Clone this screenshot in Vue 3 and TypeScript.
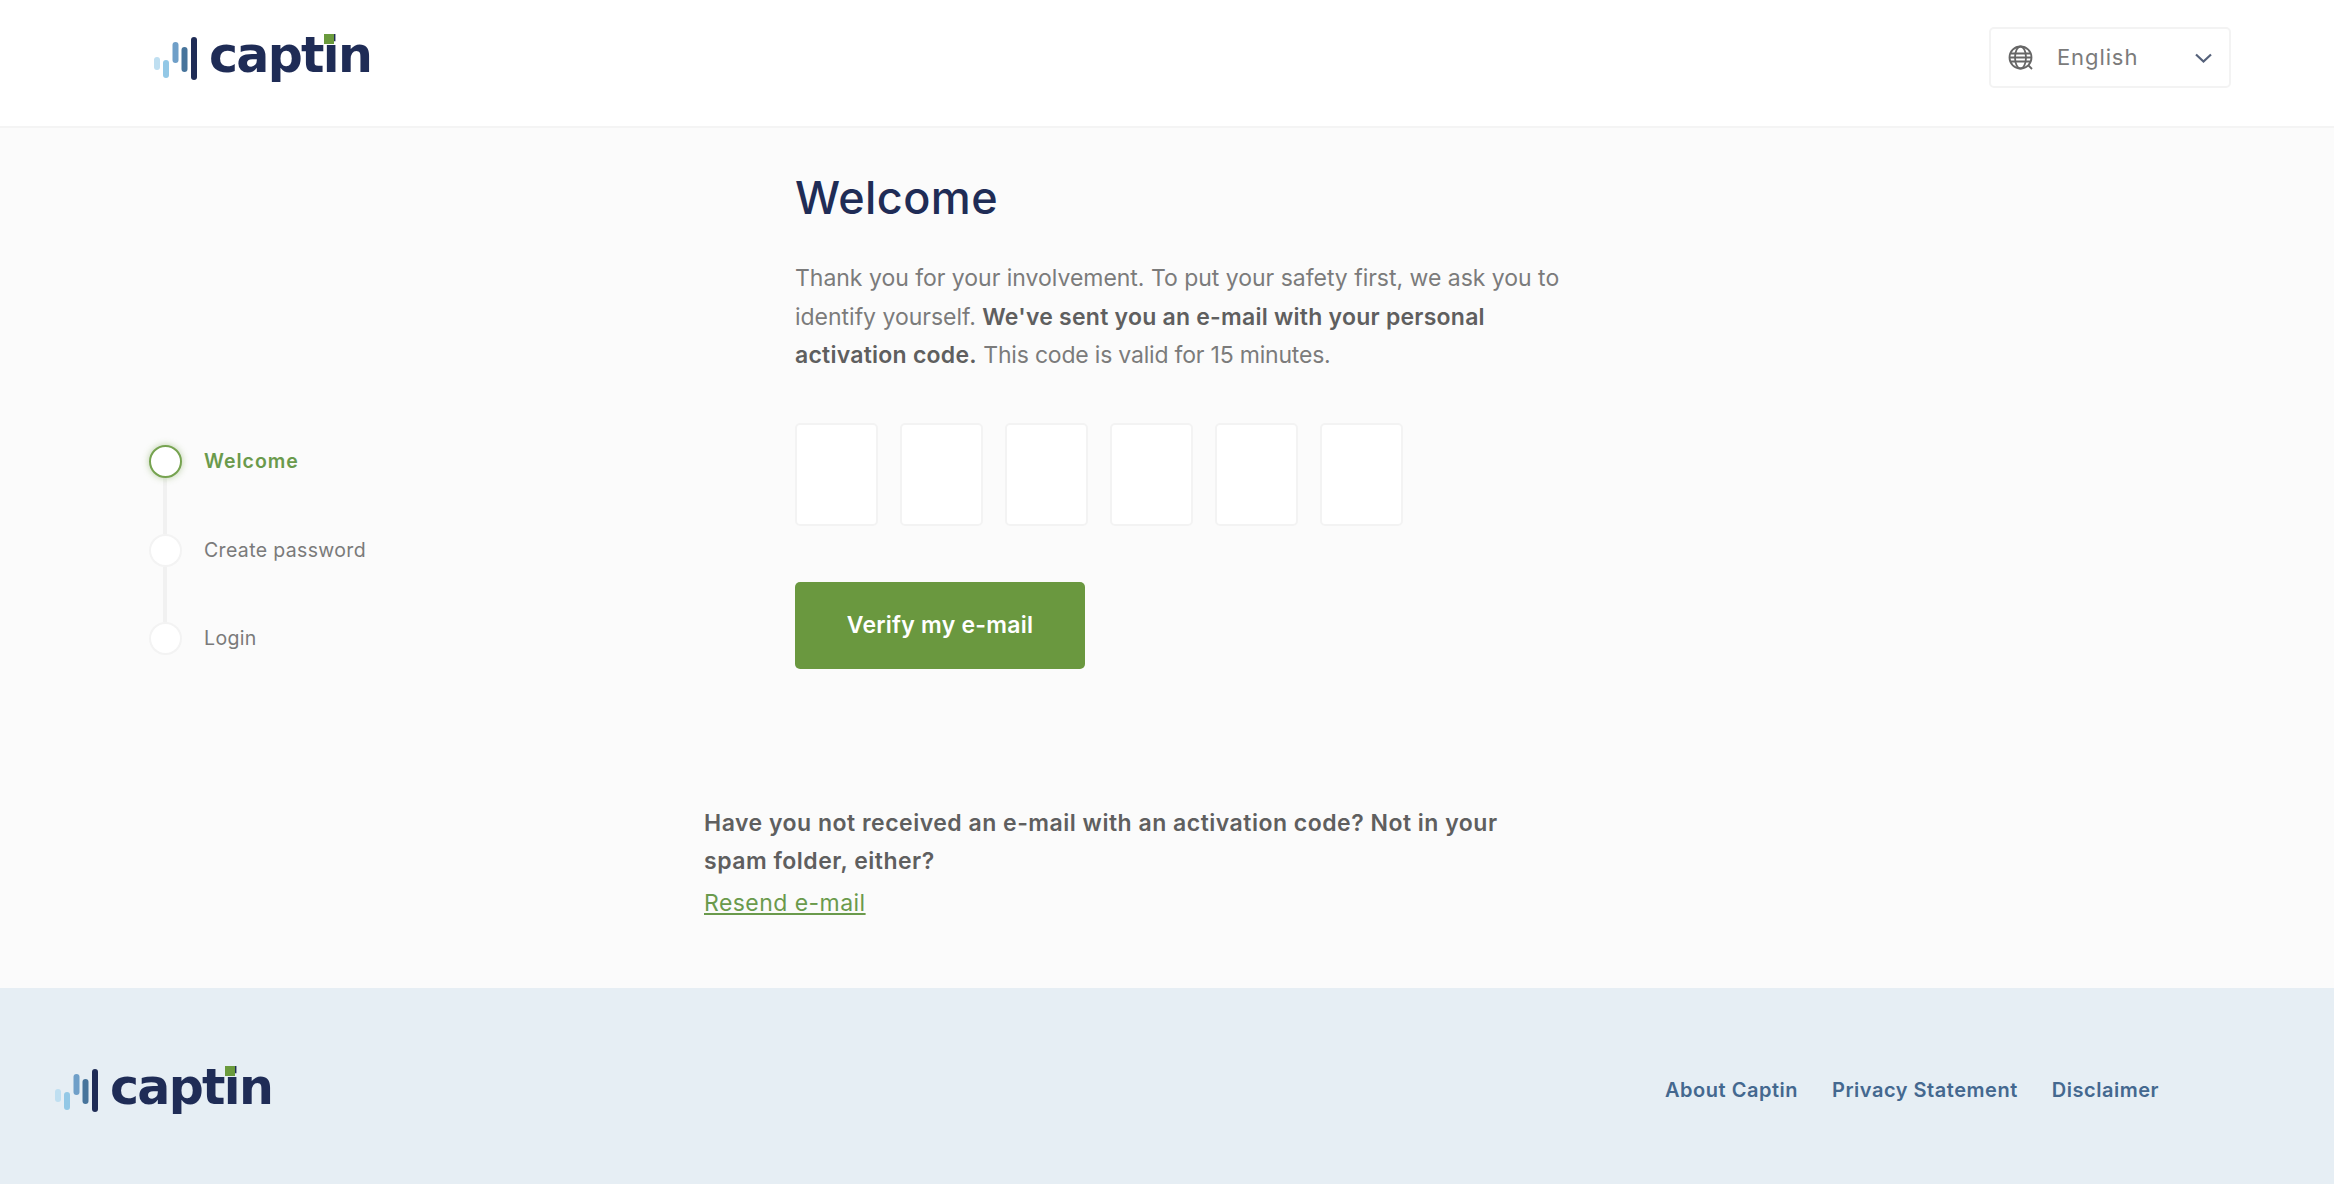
<script setup lang="ts">
import { ref } from 'vue'

const steps = [
  { label: 'Welcome', active: true },
  { label: 'Create password', active: false },
  { label: 'Login', active: false },
]
const code = ref(['', '', '', '', '', ''])
const footerLinks = ['About Captin', 'Privacy Statement', 'Disclaimer']
const bars = [
  { x: 0, y: 22, h: 13, fill: '#bfdff1' },
  { x: 9, y: 25, h: 18, fill: '#93c8e6' },
  { x: 18.5, y: 7, h: 21, fill: '#6f9fc8' },
  { x: 27.5, y: 12, h: 25, fill: '#47749b' },
  { x: 37, y: 2, h: 43, fill: '#1f2c56' },
]
</script>

<template>
  <div class="page">
    <header class="topbar">
      <div class="logo">
        <svg class="logoMark" width="43" height="46" viewBox="0 0 43 46">
          <rect v-for="b in bars" :key="b.x" :x="b.x" :y="b.y" width="6" :height="b.h" rx="3" :fill="b.fill" />
        </svg>
        <span class="logoText">captin<i class="logoDot"></i></span>
      </div>
      <div class="langSelect">
        <svg class="globe" width="26" height="26" viewBox="0 0 26 26" fill="none" stroke="#666" stroke-width="1.8">
          <circle cx="12.5" cy="12.5" r="11" />
          <ellipse cx="12.5" cy="12.5" rx="5.5" ry="11" />
          <path d="M2 8.5h21M1.5 12.5h22M2 16.5h21" />
          <path d="M20 20l4 4" />
        </svg>
        <span class="langLabel">English</span>
        <svg class="chevron" width="17" height="10" viewBox="0 0 17 10" fill="none" stroke="#55617a" stroke-width="2.2">
          <path d="M1 1.5l7.5 7 7.5-7" />
        </svg>
      </div>
    </header>

    <main class="main">
      <nav class="steps">
        <template v-for="(step, i) in steps" :key="step.label">
          <div v-if="i > 0" class="connector"></div>
          <div class="step" :class="{ active: step.active }">
            <span class="circle"></span>
            <span class="stepLabel">{{ step.label }}</span>
          </div>
        </template>
      </nav>

      <section class="content">
        <div class="intro">
          <h1>Welcome</h1>
          <p class="lead">
            Thank you for your involvement. To put your safety first, we ask you to identify yourself.
            <b>We've sent you an e-mail with your personal activation code.</b> <span class="leadEnd">This code is valid for 15 minutes.</span>
          </p>
          <div class="codeRow">
            <input v-for="(_, i) in code" :key="i" v-model="code[i]" class="codeBox" maxlength="1" />
          </div>
          <button class="verifyBtn" type="button">Verify my e-mail</button>
        </div>
        <div class="resend">
          <p>Have you not received an e-mail with an activation code? Not in your spam folder, either?</p>
          <a href="#">Resend e-mail</a>
        </div>
      </section>
    </main>

    <footer class="footer">
      <div class="logo">
        <svg class="logoMark" width="43" height="46" viewBox="0 0 43 46">
          <rect v-for="b in bars" :key="b.x" :x="b.x" :y="b.y" width="6" :height="b.h" rx="3" :fill="b.fill" />
        </svg>
        <span class="logoText">captin<i class="logoDot"></i></span>
      </div>
      <div class="footerLinks">
        <a v-for="link in footerLinks" :key="link" href="#">{{ link }}</a>
      </div>
    </footer>
  </div>
</template>

<style scoped>
.page {
  display: flex;
  flex-direction: column;
  min-height: 100vh;
  font-family: Inter, "Open Sans", sans-serif;
  color: #6f6f6f;
  background: #fbfbfb;
}

.topbar {
  box-sizing: border-box;
  height: 128px;
  padding: 27px 103px 0 154px;
  display: flex;
  justify-content: space-between;
  align-items: flex-start;
  background: #fff;
  border-bottom: 2px solid #f4f4f4;
}

.logo {
  display: flex;
  align-items: flex-start;
  margin-top: 8px;
}

.logoMark {
  flex: none;
}

.logoText {
  position: relative;
  margin-left: 12px;
  margin-top: -9px;
  font-family: "DejaVu Sans", sans-serif;
  font-weight: 700;
  font-size: 49px;
  line-height: 60px;
  letter-spacing: -1.7px;
  color: #1f2c56;
}

.logoDot {
  position: absolute;
  left: 115px;
  top: 8px;
  width: 10px;
  height: 10px;
  background: #6a9a3c;
}

.langSelect {
  box-sizing: border-box;
  width: 242px;
  height: 61px;
  padding: 0 17px;
  display: flex;
  align-items: center;
  background: #fff;
  border: 2px solid #f3f3f3;
  border-radius: 5px;
}

.langLabel {
  margin-left: 23px;
  padding-bottom: 2px;
  font-size: 22px;
  letter-spacing: 0.9px;
  color: #7b7b7b;
}

.chevron {
  margin-left: auto;
}

.main {
  flex: 1;
  display: flex;
  padding-left: 149px;
}

.steps {
  width: 555px;
  flex: none;
  padding-top: 317px;
}

.step {
  display: flex;
  align-items: center;
  height: 33px;
}

.circle {
  box-sizing: border-box;
  flex: none;
  width: 33px;
  height: 33px;
  border-radius: 50%;
  background: #fff;
  border: 2px solid #f3f3f3;
}

.step.active .circle {
  border-color: #76a350;
  box-shadow: 0 0 7px rgba(106, 154, 60, 0.45);
}

.stepLabel {
  margin-left: 22px;
  padding-bottom: 1px;
  font-size: 19.5px;
  letter-spacing: 0.35px;
  color: #7a7a7a;
}

.step.active .stepLabel {
  font-weight: 600;
  letter-spacing: 1px;
  color: #6a9a4c;
}

.connector {
  width: 4px;
  height: 55.5px;
  margin-left: 14px;
  background: #f1f1f1;
}

.content {
  flex: 1;
}

.intro {
  margin-left: 91px;
}

h1 {
  margin: 42px 0 0;
  font-size: 45px;
  line-height: 56px;
  font-weight: 500;
  letter-spacing: 0.4px;
  color: #1f2c56;
}

.lead {
  width: 790px;
  margin: 33px 0 0;
  font-size: 23px;
  line-height: 38.5px;
  font-weight: 400;
  letter-spacing: -0.02px;
  color: #7b7b7b;
}

.lead b {
  font-weight: 600;
  letter-spacing: 0.24px;
  color: #5f5f5f;
}

.leadEnd {
  letter-spacing: -0.2px;
}

.codeRow {
  display: flex;
  gap: 22px;
  margin-top: 48px;
}

.codeBox {
  box-sizing: border-box;
  width: 83px;
  height: 103px;
  padding: 0;
  background: #fff;
  border: 2px solid #f3f3f3;
  border-radius: 5px;
  outline: none;
}

.verifyBtn {
  display: block;
  width: 290px;
  height: 87px;
  margin-top: 56px;
  padding: 0;
  border: none;
  border-radius: 5px;
  background: #6a983f;
  color: #fff;
  font-family: inherit;
  font-size: 23px;
  font-weight: 600;
  letter-spacing: 0.25px;
}

.resend {
  width: 820px;
  margin-top: 135px;
  font-size: 23px;
  line-height: 38.5px;
}

.resend p {
  margin: 0;
  font-weight: 600;
  letter-spacing: 0.5px;
  color: #5f5f5f;
}

.resend a {
  display: inline-block;
  margin-top: 3px;
  letter-spacing: 0.45px;
  color: #6a9a4c;
  text-decoration: underline;
}

.footer {
  box-sizing: border-box;
  height: 196px;
  padding: 71px 175px 0 55px;
  display: flex;
  justify-content: space-between;
  align-items: flex-start;
  background: #e6eef4;
}

.footerLinks {
  display: flex;
  gap: 34px;
  margin-top: 19px;
  font-size: 20px;
  font-weight: 600;
  letter-spacing: 0.52px;
}

.footerLinks a {
  color: #44688f;
  text-decoration: none;
}
</style>
